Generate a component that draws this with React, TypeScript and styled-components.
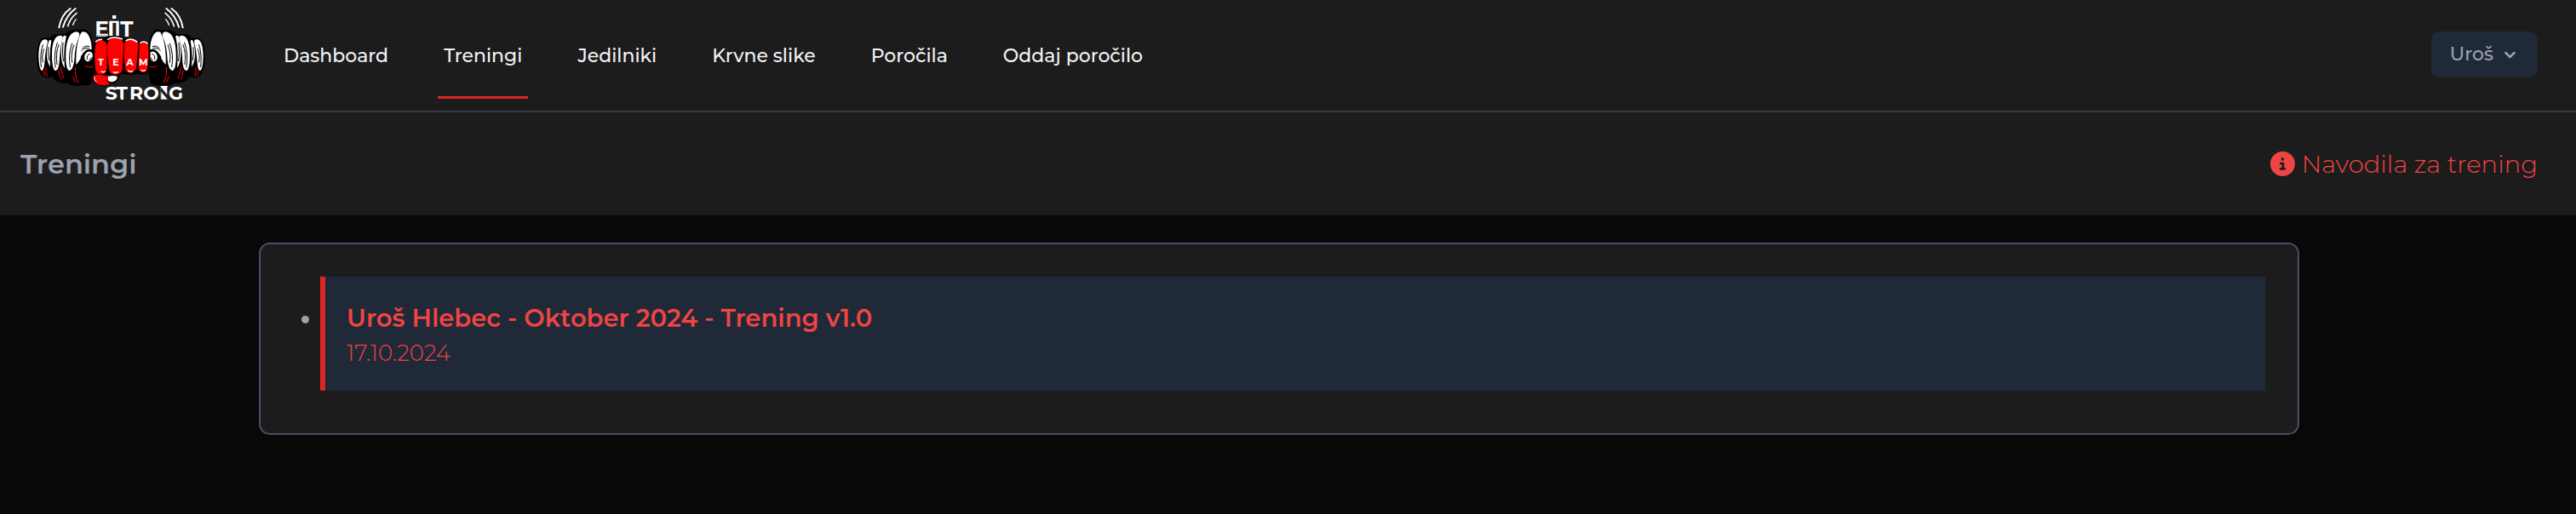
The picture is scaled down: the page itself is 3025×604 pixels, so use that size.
import React from "react";
import styled, { createGlobalStyle } from "styled-components";
import { FaCircleInfo } from "react-icons/fa6";

const GlobalStyle = createGlobalStyle`
  *, *::before, *::after { box-sizing: border-box; }
  html { background: #090909; }
  body {
    margin: 0;
    background: #090909;
    color: #9ca3af;
    font-family: Montserrat, Inter, "Liberation Sans", sans-serif;
    font-size: 26px;
    font-weight: 300;
    line-height: 40px;
  }
  a { text-decoration: none; }
`;

const TopBar = styled.nav`
  display: flex;
  align-items: flex-start;
  height: 132px;
  padding: 0 45px 0 40px;
  background: #1c1c1c;
  border-bottom: 2px solid #333b48;
`;

const LogoLink = styled.a`
  display: block;
  width: 210px;
  svg { display: block; }
`;

const NavList = styled.div`
  display: flex;
  gap: 51px;
  margin-left: 76px;
`;

const NavLink = styled.a<{ $active?: boolean }>`
  display: flex;
  align-items: center;
  height: 116px;
  padding: 18px 7px 0;
  border-bottom: 3px solid ${(p) => (p.$active ? "#dc2626" : "transparent")};
  color: #f3f4f6;
  font-size: 22px;
  font-weight: 500;
  line-height: 32px;
`;

const UserButton = styled.button`
  display: flex;
  align-items: center;
  gap: 7px;
  height: 54px;
  margin: 37px 0 0 auto;
  padding: 0 20px 0 22px;
  border: 0;
  border-radius: 10px;
  background: #1f2937;
  color: #9ca3af;
  font: inherit;
  font-size: 22px;
  font-weight: 500;
`;

const PageHeader = styled.header`
  display: flex;
  align-items: center;
  justify-content: space-between;
  height: 121px;
  padding: 0 45px 0 24px;
  background: #1c1c1c;
`;

const PageTitle = styled.h2`
  margin: 0;
  font-size: 32px;
  font-weight: 600;
  line-height: 40px;
`;

const GuideLink = styled.a`
  display: flex;
  align-items: center;
  gap: 8px;
  color: #ef4444;
  font-size: 29px;
`;

const Content = styled.main`
  padding: 32px 45px 32px 24px;
`;

const Card = styled.section`
  max-width: 2396px;
  margin: 0 auto;
  padding: 38px;
  border: 2px solid #465060;
  border-radius: 13px;
  background: #1c1c1c;
  box-shadow: 0 16px 24px -5px rgba(0, 0, 0, 0.1);
`;

const PlanList = styled.ul`
  margin: 0;
  padding: 0 0 12px;
  list-style: none;
`;

const PlanItem = styled.li`
  display: flex;
  gap: 13px;
  padding-left: 10px;
  &::before {
    content: "";
    flex: none;
    width: 9px;
    height: 9px;
    margin-top: 46px;
    border-radius: 50%;
    background: #9ca3af;
  }
`;

const PlanLink = styled.a`
  flex: 1;
  padding: 29px 25px 23px;
  border-left: 6px solid #dc2626;
  background: #1f2937;
  color: #ef4444;
`;

const PlanTitle = styled.h3`
  margin: 0;
  font-size: 29px;
  font-weight: 600;
  line-height: 40px;
`;

const PlanDate = styled.time`
  display: block;
  line-height: 42px;
`;

const LogoText = styled.text<{ $dark?: boolean }>`
  font-family: Montserrat, Inter, "Liberation Sans", sans-serif;
  font-weight: 700;
  fill: ${(p) => (p.$dark ? "#1c1c1c" : "#fff")};
`;

function Dumbbell() {
  return (
    <g>
      <g fill="none" stroke="#fff" strokeLinecap="round">
        <path d="M208 97Q216 52 248 30" strokeWidth="6" />
        <path d="M222 95Q234 54 266 30" strokeWidth="6" />
        <path d="M239 92Q247 64 270 46" strokeWidth="5" />
        <path d="M257 88Q260 77 268 68" strokeWidth="4" />
      </g>
      <path
        d="M130 198C130 158 140 134 156 133L177 134Q184 120 204 121L232 119Q244 103 266 105L300 104C316 108 325 130 328 160L334 178V238L322 290Q316 303 296 301L268 303Q248 301 240 293Q222 296 208 290Q190 284 184 271L166 274C136 270 130 238 130 198Z"
        fill="#000"
      />
      <g fill="#fff">
        <path d="M136 199C136 164 143 140 158 139Q171 139 167 153Q160 180 157 222Q154 251 146 249Q137 242 136 199Z" />
        <path d="M174 141Q183 139 180 151Q173 190 177 236Q164 218 165 186Q166 157 174 141Z" />
        <path d="M183 192C183 152 193 125 212 125Q226 126 219 142Q211 170 209 220Q206 251 194 249Q183 242 183 192Z" />
        <path d="M224 126Q237 123 232 136Q222 181 228 240Q215 224 215 184Q216 144 224 126Z" />
        <path d="M232 187C233 145 245 114 268 112Q285 113 278 132Q264 160 262 213Q257 250 243 249Q230 240 232 187Z" />
        <path d="M287 113Q303 107 314 128Q323 147 323 174Q304 169 293 187Q282 202 284 206Q276 220 268 228Q266 150 287 113Z" />
        <ellipse cx="312" cy="199" rx="14" ry="18" transform="rotate(25 312 199)" />
      </g>
      <g fill="none" stroke="#000" strokeLinecap="round" strokeWidth="3">
        <path d="M145 236Q140 190 151 158M151 219Q146 193 155 173M195 237Q188 190 202 150M201 227Q195 187 207 158M247 236Q239 192 254 153M254 220Q248 189 260 159M171 167Q168 190 173 212M222 151Q218 188 223 215" />
        <path d="M287 179Q299 165 313 170M291 170Q302 158 315 164M307 209Q304 194 316 190M315 212L322 203" />
      </g>
      <g fill="none" stroke="#f00" strokeLinecap="round" strokeWidth="3">
        <path d="M153 251L158 267M162 239Q160 253 166 268M207 249Q206 266 216 279M215 237Q214 258 225 276M266 237Q263 270 275 292M257 270L265 289M299 232Q309 240 326 235" />
      </g>
    </g>
  );
}

function Logo() {
  return (
    <svg width="210" height="125" viewBox="120 0 630 375" role="img" aria-label="Fit Team Strong">
      <defs>
        <clipPath id="plate">
          <rect x="566" y="303" width="25" height="47" />
        </clipPath>
      </defs>
      <Dumbbell />
      <g transform="translate(852 0) scale(-1 1)">
        <Dumbbell />
      </g>
      <LogoText x="334" y="128" fontSize="74">E</LogoText>
      <rect x="385" y="74" width="34" height="54" fill="#fff" />
      <LogoText x="391" y="134" fontSize="74" $dark>I</LogoText>
      <rect x="396" y="54" width="13" height="12" fill="#fff" />
      <LogoText x="424" y="128" fontSize="74">T</LogoText>
      <path d="M342 126H380" stroke="#1c1c1c" strokeWidth="3" strokeDasharray="3 2" />
      <path
        d="M328 160Q330 137 356 136Q376 125 407 126Q433 126 443 137Q466 128 487 146Q517 138 526 158L530 192Q530 244 518 258Q503 268 486 258Q464 271 438 260L420 264Q418 295 388 297Q360 312 333 292Q322 279 326 261L332 256Q324 220 328 160Z"
        fill="#000"
      />
      <g fill="#f00">
        <path d="M336 160Q340 142 358 142Q374 144 377 161V238Q376 261 354 262Q337 259 336 242Q331 200 336 160Z" />
        <path d="M379 151Q386 133 408 133Q432 135 436 153L431 242Q429 262 407 263Q385 261 384 243Q376 190 379 151Z" />
        <path d="M439 153Q446 140 463 139Q484 142 488 157L480 239Q475 257 458 257Q441 255 441 236Q434 190 439 153Z" />
        <path d="M491 163Q494 148 508 148Q522 150 523 165Q526 205 519 243Q515 256 502 256Q488 252 488 237Z" />
        <path d="M329 266Q348 260 372 268L384 264L377 284Q384 291 386 297Q358 306 340 294Q327 283 329 266Z" />
      </g>
      <g fill="none" stroke="#fff" strokeLinecap="round" strokeWidth="5">
        <path d="M338 147Q346 138 358 139M380 139Q400 126 430 137M444 143Q463 132 482 147M494 151Q508 142 519 153" />
        <path d="M357 251Q362 257 370 252M400 254Q406 259 415 254M452 249Q458 255 466 250M498 247Q504 252 511 247" strokeWidth="4" />
      </g>
      <path d="M381 270Q398 264 413 269Q414 284 398 288Q386 291 380 283Z" fill="#fff" />
      <path d="M333 271Q330 282 340 289" fill="none" stroke="#fff" strokeWidth="3" />
      <LogoText x="345 397 445 489" y="232" fontSize="33">TEAM</LogoText>
      <LogoText x="371 409 456 505" y="350" fontSize="66">STRO</LogoText>
      <rect x="566" y="303" width="25" height="47" fill="#fff" />
      <g clipPath="url(#plate)">
        <LogoText x="551" y="350" fontSize="66" $dark>N</LogoText>
      </g>
      <LogoText x="594" y="350" fontSize="66">G</LogoText>
      <path d="M408 348H428" stroke="#1c1c1c" strokeWidth="3" strokeDasharray="3 2" />
    </svg>
  );
}

function Chevron() {
  return (
    <svg width="25" height="25" viewBox="0 0 20 20" fill="currentColor" aria-hidden="true">
      <path d="M5.293 7.293a1 1 0 011.414 0L10 10.586l3.293-3.293a1 1 0 111.414 1.414l-4 4a1 1 0 01-1.414 0l-4-4a1 1 0 010-1.414z" />
    </svg>
  );
}

const links = ["Dashboard", "Treningi", "Jedilniki", "Krvne slike", "Poročila", "Oddaj poročilo"];

export default function App() {
  return (
    <>
      <GlobalStyle />
      <TopBar>
        <LogoLink href="#dashboard"><Logo /></LogoLink>
        <NavList>
          {links.map((label) => (
            <NavLink key={label} href="#" $active={label === "Treningi"}>{label}</NavLink>
          ))}
        </NavList>
        <UserButton type="button">
          Uroš
          <Chevron />
        </UserButton>
      </TopBar>
      <PageHeader>
        <PageTitle>Treningi</PageTitle>
        <GuideLink href="#navodila">
          <FaCircleInfo aria-hidden="true" />
          Navodila za trening
        </GuideLink>
      </PageHeader>
      <Content>
        <Card>
          <PlanList>
            <PlanItem>
              <PlanLink href="#trening">
                <PlanTitle>Uroš Hlebec - Oktober 2024 - Trening v1.0</PlanTitle>
                <PlanDate dateTime="2024-10-17">17.10.2024</PlanDate>
              </PlanLink>
            </PlanItem>
          </PlanList>
        </Card>
      </Content>
    </>
  );
}
